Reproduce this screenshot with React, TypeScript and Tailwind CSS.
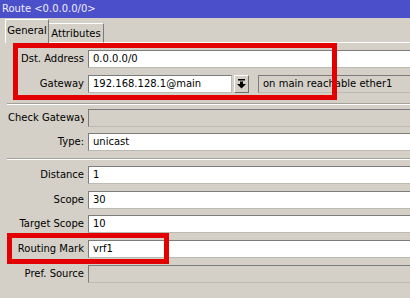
import type React from "react"

const sunken =
  "h-[18px] border border-t-[#7c7c7c] border-l-[#7c7c7c] border-b-[#bdbab3] border-r-[#bdbab3] pl-[4px] leading-[16px] whitespace-nowrap overflow-hidden"

function Label({ text }: { text: string }) {
  return (
    <div className="w-[76px] shrink-0 text-right whitespace-nowrap overflow-hidden leading-[18px] mr-[4px]">
      {text}
    </div>
  )
}

function Row({ label, value, disabled, className = "" }: { label: string; value?: string; disabled?: boolean; className?: string }) {
  return (
    <div className={`flex h-[18px] pl-[8px] w-[414px] ${className}`}>
      <Label text={label} />
      <div className={`flex-1 ${sunken} ${disabled ? "bg-[#d4d0c8]" : "bg-white"}`}>{value}</div>
    </div>
  )
}

function Separator({ className = "" }: { className?: string }) {
  return <div className={`ml-[7px] h-[2px] border-t border-t-[#a3a09a] border-b border-b-white ${className}`} />
}

function DropButton() {
  return (
    <div className="w-[15px] h-[18px] ml-[2px] shrink-0 flex items-center justify-center bg-[#d4d0c8] border border-t-white border-l-white border-b-[#6e6e6e] border-r-[#6e6e6e]">
      <svg width="9" height="10" viewBox="0 0 9 10">
        <rect x="1" y="0" width="7" height="1.5" fill="#000" />
        <rect x="3" y="2.5" width="3" height="2.5" fill="#000" />
        <polygon points="0,5 9,5 4.5,9.5" fill="#000" />
      </svg>
    </div>
  )
}

export default function App() {
  return (
    <div className="relative w-[410px] h-[298px] overflow-hidden bg-[#d4d0c8] font-['DejaVu_Sans',sans-serif] text-[10px] text-black">
      {/* Title bar */}
      <div className="h-[18px] bg-[#4b4fc9] text-[#eeeeff] pl-[2px] leading-[18px]">Route &lt;0.0.0.0/0&gt;</div>

      {/* Tabs */}
      <div className="flex items-end h-[25px] pl-[5px] pt-[1px]">
        <div className="h-[24px] w-[44px] shrink-0 border-t border-l border-t-white border-l-white border-r border-r-[#7c7c7c] flex items-center justify-center pb-[2px]">
          General
        </div>
        <div className="h-[20px] w-[55px] shrink-0 border-t border-t-white border-r border-r-[#7c7c7c] border-b border-b-white flex items-center justify-center">
          Attributes
        </div>
        <div className="flex-1 h-full border-b border-b-white" />
      </div>

      {/* Form */}
      <div className="pt-[7px]">
        <Row label="Dst. Address" value="0.0.0.0/0" />
        <div className="flex h-[18px] pl-[8px] w-[414px] mt-[7px]">
          <Label text="Gateway" />
          <div className={`w-[144px] shrink-0 bg-white ${sunken}`}>192.168.128.1@main</div>
          <DropButton />
          <div className={`flex-1 ml-[9px] bg-[#d4d0c8] ${sunken}`}>on main reachable ether1</div>
        </div>

        <Separator className="mt-[10px] mb-[4px]" />

        <Row label="Check Gateway" disabled />
        <Row label="Type:" value="unicast" className="mt-[6px]" />

        <Separator className="mt-[7px] mb-[6px]" />

        <Row label="Distance" value="1" />
        <Row label="Scope" value="30" className="mt-[7px]" />
        <Row label="Target Scope" value="10" className="mt-[6px]" />
        <Row label="Routing Mark" value="vrf1" className="mt-[7px]" />
        <Row label="Pref. Source" disabled className="mt-[7px]" />
      </div>

      {/* Annotation boxes */}
      <div className="absolute left-[13px] top-[43px] w-[324px] h-[57px] border-[5px] border-[#e30000]" />
      <div className="absolute left-[7px] top-[233px] w-[162px] h-[31px] border-[5px] border-[#e30000]" />
    </div>
  )
}
